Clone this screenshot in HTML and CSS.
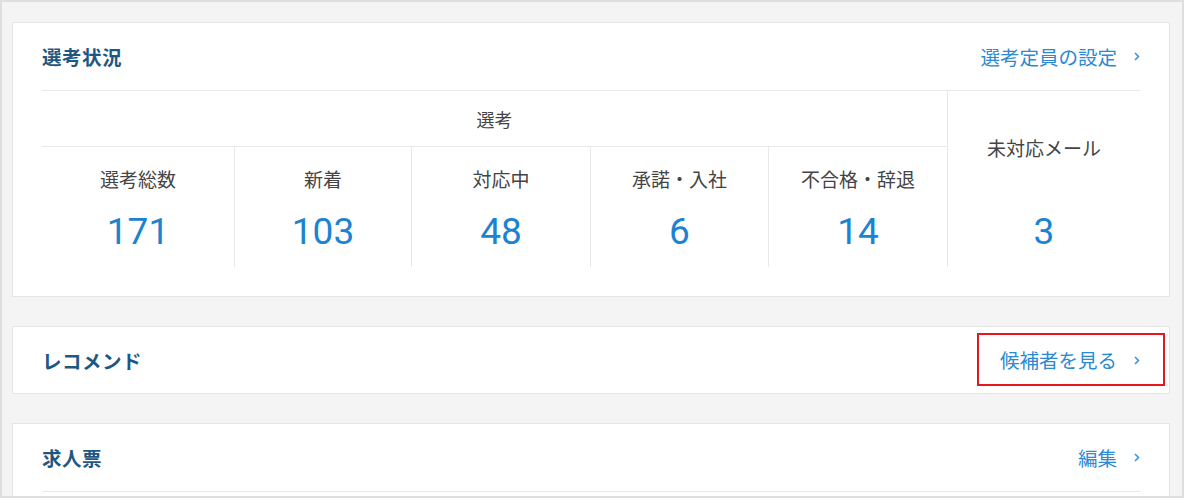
FILE: index.html
```html
<!DOCTYPE html>
<html lang="ja">
<head>
  <meta charset="UTF-8">
  <title>選考状況</title>
  <link rel="stylesheet" href="styles.css">
</head>
<body>

<div class="frame">

  <!-- 選考状況 -->
  <section class="card">
    <div class="card-head">
      <h2 class="card-title">選考状況</h2>
      <a class="more-link" href="#">選考定員の設定<svg class="chev" width="6" height="9" viewBox="0 0 6 9"><path d="M1 1l3.5 3.5L1 8" fill="none" stroke="currentColor" stroke-width="1.6"/></svg></a>
    </div>
    <div class="stats">
      <div class="stats-group">選考</div>
      <div class="stat stat-mail">
        <span class="stat-label">未対応メール</span>
        <span class="stat-num">3</span>
      </div>
      <div class="stat first">
        <span class="stat-label">選考総数</span>
        <span class="stat-num">171</span>
      </div>
      <div class="stat">
        <span class="stat-label">新着</span>
        <span class="stat-num">103</span>
      </div>
      <div class="stat">
        <span class="stat-label">対応中</span>
        <span class="stat-num">48</span>
      </div>
      <div class="stat">
        <span class="stat-label">承諾・入社</span>
        <span class="stat-num">6</span>
      </div>
      <div class="stat">
        <span class="stat-label">不合格・辞退</span>
        <span class="stat-num">14</span>
      </div>
    </div>
  </section>

  <!-- レコメンド -->
  <section class="card">
    <div class="card-head no-line">
      <h2 class="card-title">レコメンド</h2>
      <a class="more-link marked" href="#">候補者を見る<svg class="chev" width="6" height="9" viewBox="0 0 6 9"><path d="M1 1l3.5 3.5L1 8" fill="none" stroke="currentColor" stroke-width="1.6"/></svg></a>
    </div>
  </section>

  <!-- 求人票 -->
  <section class="card">
    <div class="card-head">
      <h2 class="card-title">求人票</h2>
      <a class="more-link" href="#">編集<svg class="chev" width="6" height="9" viewBox="0 0 6 9"><path d="M1 1l3.5 3.5L1 8" fill="none" stroke="currentColor" stroke-width="1.6"/></svg></a>
    </div>
    <div class="card-body"></div>
  </section>

</div>

</body>
</html>
```

FILE: styles.css
```css
body {
  margin: 0;
  font-family: "Noto Sans CJK JP", "Noto Sans", sans-serif;
  color: #333;
}

.frame {
  box-sizing: border-box;
  width: 1184px;
  height: 498px;
  overflow: hidden;
  background-color: #f4f4f4;
  border: 2px solid #dedede;
  padding: 20px 12px 0 10px;
  display: flex;
  flex-direction: column;
  gap: 29px;
}

.card {
  background-color: #fff;
  border: 1px solid #e4e4e4;
  padding: 0 29px;
  flex-shrink: 0;
}

.card-head {
  height: 67px;
  display: flex;
  align-items: center;
  justify-content: space-between;
  border-bottom: 1px solid #e8e8e8;
}

.card-head.no-line {
  border-bottom: none;
  height: 66px;
}

.card-title {
  margin: 0;
  font-size: 19.5px;
  font-weight: 700;
  color: #1e5782;
  letter-spacing: 0.5px;
}

.more-link {
  position: relative;
  display: flex;
  align-items: center;
  font-size: 19.5px;
  line-height: 28px;
  color: #2b8ad2;
  text-decoration: none;
}

.more-link .chev {
  margin-left: 17px;
  color: #3b95d8;
}

/* roter Rahmen um den Link */
.more-link.marked::before {
  content: "";
  position: absolute;
  left: -23px;
  right: -25px;
  top: -13px;
  bottom: -12px;
  border: 2px solid #e8141e;
}

.stats {
  display: grid;
  grid-template-columns: 192px 177px 179px 178px 179px 1fr;
  grid-template-rows: 56px 120px;
  padding-bottom: 29px;
}

.stats-group {
  grid-column: 1 / 6;
  grid-row: 1;
  display: flex;
  align-items: center;
  justify-content: center;
  font-size: 18px;
  color: #444;
  border-bottom: 1px solid #e8e8e8;
}

.stat {
  grid-row: 2;
  display: flex;
  flex-direction: column;
  align-items: center;
  padding-top: 18px;
  border-left: 1px solid #e8e8e8;
}

.stat.first {
  border-left: none;
}

.stat-mail {
  grid-column: 6;
  grid-row: 1 / 3;
  padding-top: 43px;
}

.stat-label {
  font-size: 19px;
  line-height: 28px;
  color: #444;
}

.stat-num {
  margin-top: 17px;
  font-family: Roboto, "Liberation Sans", sans-serif;
  font-size: 37px;
  line-height: 44px;
  color: #1b83d1;
}

.stat-mail .stat-num {
  margin-top: 48px;
}

.card-body {
  height: 40px;
}
```
